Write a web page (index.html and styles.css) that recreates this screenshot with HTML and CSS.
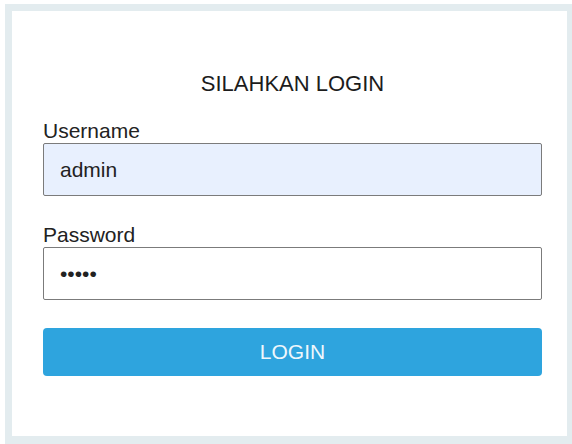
FILE: index.html
```html
<!DOCTYPE html>
<html lang="id">
<head>
<meta charset="utf-8">
<title>Login</title>
<link rel="stylesheet" href="styles.css">
</head>
<body>
  <div class="frame">
    <form class="card" onsubmit="return false">
      <h1 class="title">SILAHKAN LOGIN</h1>
      <label class="label" for="username">Username</label>
      <input class="field field-filled" id="username" type="text" value="admin">
      <label class="label label-gap" for="password">Password</label>
      <input class="field" id="password" type="password" value="admin">
      <button class="btn-login" type="submit">LOGIN</button>
    </form>
  </div>
</body>
</html>
```

FILE: styles.css
```css
* {
  box-sizing: border-box;
}

html, body {
  margin: 0;
  background: #ffffff;
}

body {
  padding: 4px 0 0 5px;
  font-family: "Liberation Sans", Arial, sans-serif;
  color: #222222;
}

.frame {
  width: 567px;
  height: 440px;
  border-style: solid;
  border-color: #e3ecef;
  border-width: 7px 5px 8px 7px;
  background: #ffffff;
}

.card {
  display: flex;
  flex-direction: column;
  height: 100%;
  padding: 60px 25px 0 31px;
  margin: 0;
}

.title {
  margin: 0 0 22px;
  font-size: 22px;
  line-height: 26px;
  font-weight: normal;
  text-align: center;
  color: #1c1c1c;
}

.label {
  display: block;
  font-size: 21px;
  line-height: 24px;
  color: #222222;
}

.label-gap {
  margin-top: 27px;
}

.field {
  display: block;
  width: 100%;
  height: 53px;
  margin: 0;
  padding: 0 16px;
  border: 1px solid #7b7b7b;
  border-radius: 2px;
  background: #ffffff;
  font-family: "Liberation Sans", Arial, sans-serif;
  font-size: 21px;
  color: #222222;
  outline: none;
}

.field-filled {
  background: #e8f0fe;
}

.btn-login {
  display: block;
  width: 100%;
  height: 48px;
  margin-top: 28px;
  border: none;
  border-radius: 4px;
  background: #2ea4de;
  color: #eef7fc;
  font-family: "Liberation Sans", Arial, sans-serif;
  font-size: 21px;
  cursor: pointer;
}
```
